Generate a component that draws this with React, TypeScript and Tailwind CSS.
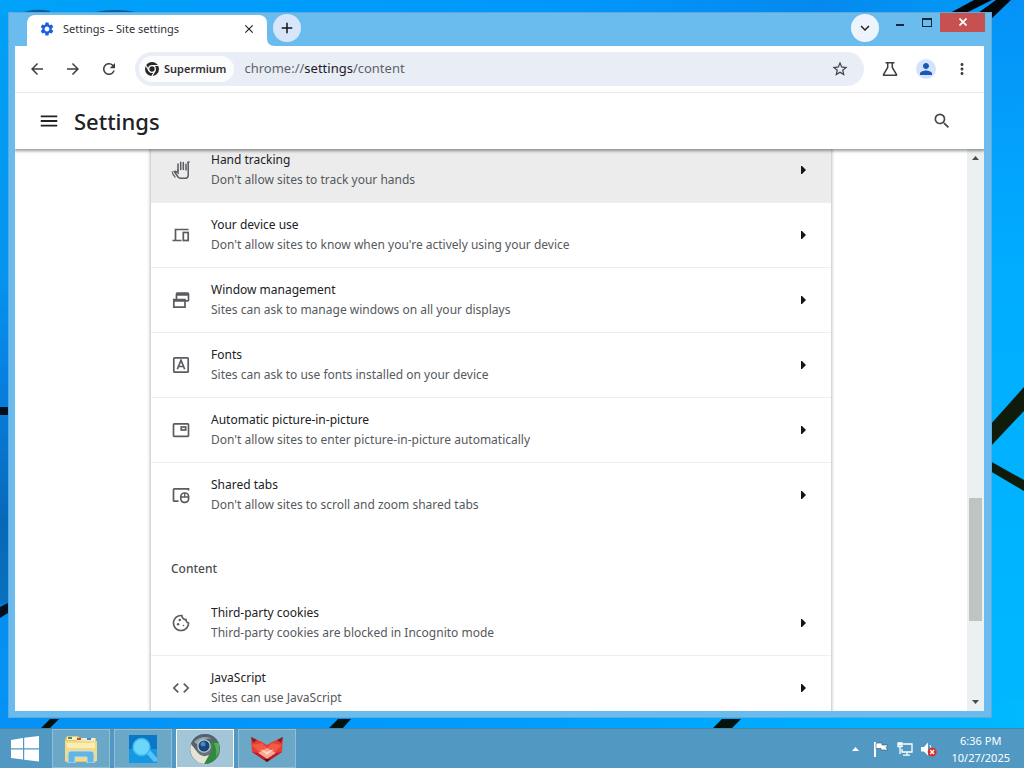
import type { ReactNode } from "react";
import {
  MdArrowBack,
  MdArrowForward,
  MdRefresh,
  MdStarBorder,
  MdPerson,
  MdMoreVert,
  MdMenu,
  MdSearch,
  MdSettings,
  MdClose,
  MdAdd,
  MdKeyboardArrowDown,
  MdCode,
  MdOutlineCookie,
} from "react-icons/md";

type Setting = { title: string; detail: string; icon: ReactNode; active?: boolean };

const stroke = {
  viewBox: "0 0 20 20",
  fill: "none",
  stroke: "currentColor",
  strokeWidth: 1.7,
  className: "size-5",
  "aria-hidden": true,
} as const;

const HandIcon = () => (
  <svg {...stroke} strokeWidth={1.5} strokeLinecap="round">
    <path d="M7 10.500V4M9.700 9.500V2.200M12.300 9.500V2.500M15 10V4.200" />
    <path d="M17.200 2.500V15.500Q17.200 18.200 14.500 18.200H9.500Q8 18.200 7 17L3.200 11.500Q4.500 10.500 7 13V10" />
    <path d="M1.200 11.800Q1.500 14.500 4.200 17.200M16.500 2.300L18.300 1.800" strokeWidth={1.2} />
  </svg>
);

const DevicesIcon = () => (
  <svg {...stroke}>
    <path d="M17.500 4.500H4.500V15M1.500 15.500H10.500" />
    <rect x="12.300" y="7.500" width="4.900" height="8" />
  </svg>
);

const WindowsIcon = () => (
  <svg {...stroke}>
    <path d="M5.500 9V4Q5.500 3.200 6.300 3.200H16.700Q17.500 3.200 17.500 4V10Q17.500 10.800 16.700 10.800H14.500M5.500 4.800H17.500" />
    <path d="M2.800 9.500H14V17.200H2.800ZM2.800 10.800H14" />
  </svg>
);

const FontsIcon = () => (
  <svg {...stroke}>
    <rect x="2.800" y="2.800" width="14.400" height="14.400" rx="0.800" />
    <path d="M6.300 14.300L10 5.300L13.700 14.300M7.500 11.500H12.500" />
  </svg>
);

const PipIcon = () => (
  <svg {...stroke}>
    <rect x="2.500" y="3.800" width="15" height="12.500" rx="0.800" />
    <rect x="10.200" y="7" width="4.500" height="3" />
  </svg>
);

const SharedTabsIcon = () => (
  <svg {...stroke}>
    <path d="M7.500 16.200H3.300Q2.500 16.200 2.500 15.400V4.600Q2.500 3.800 3.300 3.800H17.500V5.500" />
    <rect x="9.800" y="8" width="7.800" height="9.400" rx="3.600" />
    <path d="M9.800 12H17.600M13.700 8V12" strokeWidth={1.3} />
  </svg>
);

const permissions: Setting[] = [
  { title: "Hand tracking", detail: "Don't allow sites to track your hands", icon: <HandIcon />, active: true },
  { title: "Your device use", detail: "Don't allow sites to know when you're actively using your device", icon: <DevicesIcon /> },
  { title: "Window management", detail: "Sites can ask to manage windows on all your displays", icon: <WindowsIcon /> },
  { title: "Fonts", detail: "Sites can ask to use fonts installed on your device", icon: <FontsIcon /> },
  { title: "Automatic picture-in-picture", detail: "Don't allow sites to enter picture-in-picture automatically", icon: <PipIcon /> },
  { title: "Shared tabs", detail: "Don't allow sites to scroll and zoom shared tabs", icon: <SharedTabsIcon /> },
];

const content: Setting[] = [
  { title: "Third-party cookies", detail: "Third-party cookies are blocked in Incognito mode", icon: <MdOutlineCookie className="size-5" /> },
  { title: "JavaScript", detail: "Sites can use JavaScript", icon: <MdCode className="size-5" /> },
];

function SettingList({ items }: { items: Setting[] }) {
  return (
    <ul className="divide-y divide-[#eeeeee]">
      {items.map((s) => (
        <li key={s.title}>
          <button
            type="button"
            className={`flex h-16 w-full items-center px-5 text-left ${s.active ? "bg-[#ececec]" : "bg-white"}`}
          >
            <span className="w-10 shrink-0 text-[#5a5c60]">{s.icon}</span>
            <span className="flex min-w-0 flex-1 flex-col text-xs leading-5">
              <span className="text-[#202124]">{s.title}</span>
              <span className="text-[#56595d]">{s.detail}</span>
            </span>
            <svg viewBox="0 0 5 8" className="mr-[5px] h-2 w-[5px] fill-[#151515]" aria-hidden="true">
              <path d="M0 0H1L5 4L1 8H0Z" />
            </svg>
          </button>
        </li>
      ))}
    </ul>
  );
}

function Wallpaper() {
  return (
    <svg viewBox="0 0 1024 768" preserveAspectRatio="none" className="absolute inset-0 size-full" aria-hidden="true">
      <defs>
        <linearGradient id="sky" x1="0" y1="0" x2="1" y2="0">
          <stop offset="0" stopColor="#00a2f8" />
          <stop offset="0.550" stopColor="#0097fd" />
          <stop offset="0.800" stopColor="#0589ee" />
          <stop offset="1" stopColor="#009df8" />
        </linearGradient>
        <linearGradient id="right" x1="0" y1="0" x2="0" y2="1">
          <stop offset="0" stopColor="#0592f8" />
          <stop offset="0.350" stopColor="#00adff" />
          <stop offset="1" stopColor="#00b9ff" />
        </linearGradient>
        <linearGradient id="left" x1="0" y1="0" x2="0" y2="1">
          <stop offset="0" stopColor="#00a2f8" />
          <stop offset="0.400" stopColor="#0593f0" />
          <stop offset="0.550" stopColor="#077fe0" />
          <stop offset="0.750" stopColor="#0868b8" />
          <stop offset="0.860" stopColor="#0870c0" />
          <stop offset="0.870" stopColor="#058ff0" />
          <stop offset="1" stopColor="#0593f5" />
        </linearGradient>
        <linearGradient id="floor" x1="0" y1="0" x2="1" y2="0">
          <stop offset="0" stopColor="#0590f5" />
          <stop offset="0.500" stopColor="#009dff" />
          <stop offset="1" stopColor="#00b9ff" />
        </linearGradient>
      </defs>
      <rect width="1024" height="768" fill="url(#sky)" />
      <rect x="984" width="40" height="768" fill="url(#right)" />
      <rect width="12" height="700" fill="url(#left)" />
      <rect y="700" width="1024" height="68" fill="url(#floor)" />
      <path d="M24 12Q35 8 50 11V12ZM95 12Q115 8 136 12Z" fill="#075b9c" />
      <path d="M950 13L974 0H992L966 13ZM978 13L996 0H1011L990 20Z" fill="#02070a" />
      <path d="M990 425L1024 387V411L990 447ZM990 461L1024 480V491L990 471Z" fill="#101c0b" />
      <path d="M0 407H8V415H0ZM0 607L8 603V613L0 618Z" fill="#02101b" />
      <path d="M40 729L50 719H59L49 729ZM328 729L338 719H351L342 729ZM712 729L722 719H741L731 729Z" fill="#02130d" />
    </svg>
  );
}

function TabStrip() {
  return (
    <div className="-mr-px flex h-[34px] shrink-0 items-start">
      <div className="ml-3 mt-[3px] flex h-[31px] w-60 items-center rounded-t-lg bg-white pb-[3px] pl-3 pr-2">
        <MdSettings className="size-4 text-[#1a60dc]" />
        <span className="ml-2 flex-1 text-[11px] text-[#303134]">Settings – Site settings</span>
        <button type="button" aria-label="Close tab" className="flex size-5 items-center justify-center text-[#202124]">
          <MdClose className="size-3.5" />
        </button>
      </div>
      <svg viewBox="0 0 8 8" className="size-2 self-end fill-white" aria-hidden="true">
        <path d="M0 0Q0 8 8 8H0Z" />
      </svg>
      <button type="button" aria-label="New tab" className="-ml-0.5 mt-0.5 flex size-7 items-center justify-center rounded-full bg-[#d7e6fb] text-[#151515]">
        <MdAdd className="size-[18px]" />
      </button>
      <div className="ml-auto flex items-start">
        <button type="button" aria-label="Search tabs" className="mr-[7px] mt-0.5 flex size-7 items-center justify-center rounded-full bg-[#edf4fc] text-[#202124]">
          <MdKeyboardArrowDown className="size-[18px]" />
        </button>
        <button type="button" aria-label="Minimize" className="flex h-5 w-[27px] items-center justify-center">
          <span className="mt-1.5 h-0.5 w-2 bg-[#152837]" />
        </button>
        <button type="button" aria-label="Maximize" className="flex h-5 w-[27px] items-center justify-center">
          <span className="h-[9px] w-2.5 border border-t-2 border-[#152837]" />
        </button>
        <button type="button" aria-label="Close" className="flex h-5 w-[45px] items-center justify-center bg-[#c75050] text-white">
          <svg viewBox="0 0 8 8" className="size-2" stroke="currentColor" strokeWidth="1.800" aria-hidden="true">
            <path d="M0.500 0.500L7.500 7.500M7.500 0.500L0.500 7.500" />
          </svg>
        </button>
      </div>
    </div>
  );
}

function Toolbar() {
  return (
    <div className="flex h-[47px] shrink-0 items-center border-b border-[#e8e8e8] bg-white pl-1 pr-1">
      <button type="button" aria-label="Back" className="flex size-9 items-center justify-center text-[#3c4043]">
        <MdArrowBack className="size-[18px]" />
      </button>
      <button type="button" aria-label="Forward" className="flex size-9 items-center justify-center text-[#3c4043]">
        <MdArrowForward className="size-[18px]" />
      </button>
      <button type="button" aria-label="Reload" className="flex size-9 items-center justify-center text-[#3c4043]">
        <MdRefresh className="size-[18px]" />
      </button>
      <div className="ml-2 flex h-[34px] flex-1 items-center rounded-full bg-[#e9eef6] px-1">
        <span className="flex h-[26px] items-center gap-1 rounded-full bg-[#fcfcfd] pl-[5px] pr-2 text-[11px] font-semibold text-[#303134]">
          <svg viewBox="0 0 16 16" className="size-4" aria-hidden="true">
            <circle cx="8" cy="8" r="7" fill="#252729" />
            <circle cx="8" cy="8" r="3.300" fill="#252729" stroke="white" strokeWidth="1.300" />
            <path d="M8 4.500H14M5 9.700L2 4.500M11 9.700L8 15" stroke="white" strokeWidth="1.200" />
          </svg>
          Supermium
        </span>
        <span className="ml-2.5 flex-1 text-[13px] text-[#5f6368]">
          chrome://<span className="text-[#202124]">settings</span>/content
        </span>
        <button type="button" aria-label="Bookmark this page" className="mr-[11px] text-[#3c4043]">
          <MdStarBorder className="size-[18px]" />
        </button>
      </div>
      <button type="button" aria-label="Experiments" className="ml-2 flex size-9 items-center justify-center text-[#3c4043]">
        <svg viewBox="0 0 18 18" className="size-[18px]" fill="none" stroke="currentColor" strokeWidth="1.500" aria-hidden="true">
          <path d="M4.500 2.700H13.500M6.700 3V7.500L2.500 14.500Q2.200 15.300 3 15.300H15Q15.800 15.300 15.500 14.500L11.300 7.500V3" />
        </svg>
      </button>
      <button type="button" aria-label="Profile" className="flex size-9 items-center justify-center">
        <span className="flex size-5 items-center justify-center rounded-full bg-[#d3e3fd] text-[#1a55b8]">
          <MdPerson className="size-[18px]" />
        </span>
      </button>
      <button type="button" aria-label="Menu" className="flex size-9 items-center justify-center text-[#3c4043]">
        <MdMoreVert className="size-[18px]" />
      </button>
    </div>
  );
}

function Scrollbar() {
  return (
    <div className="flex w-[17px] shrink-0 flex-col items-center bg-[#edf0f0]" aria-hidden="true">
      <svg viewBox="0 0 7 4" className="mt-[7px] h-1 w-[7px] fill-[#4b4b4b]">
        <path d="M0 4L3.500 0L7 4Z" />
      </svg>
      <div className="flex w-[13px] flex-1 flex-col py-[7px]">
        <div className="flex-[330]" />
        <div className="flex-[123] bg-[#bfc3c2]" />
        <div className="flex-[72]" />
      </div>
      <svg viewBox="0 0 7 4" className="mb-[7px] h-1 w-[7px] fill-[#4b4b4b]">
        <path d="M0 0L3.500 4L7 0Z" />
      </svg>
    </div>
  );
}

const FolderArt = () => (
  <svg viewBox="0 0 34 28" className="h-7 w-[34px]" aria-hidden="true">
    <path d="M1 4L3 1H14L16 3H32V27H1Z" fill="#e6c66c" />
    <path d="M3 2H13V5H3Z" fill="#f4f0d2" />
    <path d="M4 2H8V4H4Z" fill="#3c9a58" />
    <path d="M13 3H24V6H13Z" fill="#f3e7c8" />
    <path d="M13 3H17V5H13Z" fill="#c8502f" />
    <path d="M23 3H31V6H23Z" fill="#e8eee6" />
    <path d="M23 3H27V5H23Z" fill="#3f8fc4" />
    <path d="M1 6H33V26H1Z" fill="#f3da86" />
    <path d="M3 8H31V13H3Z" fill="#fbeeb2" />
    <path d="M4 28V19Q4 16 7 16H27Q30 16 30 19V28H23V22H11V28Z" fill="#64b5e4" stroke="#b4e0f2" />
  </svg>
);

const SearchArt = () => (
  <svg viewBox="0 0 28 28" className="size-7" aria-hidden="true">
    <rect width="28" height="28" fill="#0878c8" />
    <path d="M0 14H28V28H0Z" fill="#1598e4" />
    <path d="M17 18L21 15L28 23V26L25 27Z" fill="#55c4f5" />
    <circle cx="12.500" cy="12" r="8.500" fill="#6bd8fb" stroke="#44b5ea" strokeWidth="1.500" />
  </svg>
);

const BrowserArt = () => (
  <svg viewBox="0 0 32 32" className="size-8" aria-hidden="true">
    <circle cx="16" cy="16" r="15" fill="#64717a" />
    <path d="M1.500 13Q4 1.500 16 1Q25 1 29 9L20 10Q11 7 9 17Z" fill="#56626b" />
    <path d="M20 9H29.500Q33 21 25 27Q21 31 15 31L22 20Q25 14 20 9Z" fill="#2f8a3e" />
    <path d="M25 10H29.500Q32 18 27 24Q28 16 25 10Z" fill="#58ad5c" />
    <path d="M2 11L9 20Q13 25 20 22L15 31Q7 30 3 23Q0 17 2 11Z" fill="#e3e4d4" />
    <path d="M5 9Q13 1 24 6Q15 4 9 12Z" fill="#94a5ad" />
    <circle cx="15" cy="13" r="6.800" fill="#bac9d5" />
    <circle cx="15" cy="13" r="5.500" fill="#174679" />
    <circle cx="14" cy="11" r="2.500" fill="#4e86b8" />
  </svg>
);

const FoxArt = () => (
  <svg viewBox="0 0 34 28" className="h-7 w-[34px]" aria-hidden="true">
    <path d="M1 2L12 7L17 10L22 7L33 2L32 17L26 21L17 27L8 21L2 17Z" fill="#e63c32" />
    <path d="M1 2L7 5L3 8ZM33 2L27 5L31 8Z" fill="#7b2230" />
    <path d="M2 10L12 8L17 13L22 8L32 10L24 18L17 13L10 18Z" fill="#f05a46" />
    <path d="M8 18L17 13L26 18L17 24Z" fill="#f8a890" />
    <path d="M10 14L17 20L24 14L17 17Z" fill="#ffd7c2" />
    <path d="M2 17L8 18L17 24L26 18L32 17L26 21L17 27L8 21Z" fill="#b51f2d" />
    <path d="M14 24H20L17 27Z" fill="#401622" />
  </svg>
);

const apps = [
  { name: "File Explorer", art: <FolderArt />, current: false },
  { name: "Search", art: <SearchArt />, current: false },
  { name: "Supermium", art: <BrowserArt />, current: true },
  { name: "Fox", art: <FoxArt />, current: false },
];

function Taskbar() {
  return (
    <footer className="relative flex h-10 shrink-0 items-stretch border-t border-[#4588ae] bg-[#5199c2] text-white">
      <button type="button" aria-label="Start" className="flex w-[52px] items-center justify-center pr-0.5">
        <svg viewBox="0 0 28 26" className="h-[26px] w-7 fill-white" aria-hidden="true">
          <path d="M0 4L12 2V12.300H0ZM13.200 1.800L28 0V12.300H13.200ZM0 13.500H12V23.500L0 22ZM13.200 13.500H28V25.500L13.200 23.700Z" />
        </svg>
      </button>
      <div className="flex gap-1">
        {apps.map((a) => (
          <button
            key={a.name}
            type="button"
            aria-label={a.name}
            className={`flex w-[58px] items-center justify-center border ${
              a.current ? "border-white bg-[#a3c5d8]" : "border-[#91bdd5] bg-[#6ba7c7]"
            }`}
          >
            {a.art}
          </button>
        ))}
      </div>
      <div className="ml-auto flex items-center pr-3.5">
        <svg viewBox="0 0 7 4" className="h-1 w-[7px] fill-white" aria-hidden="true">
          <path d="M0 4L3.500 0L7 4Z" />
        </svg>
        <svg viewBox="0 0 16 16" className="ml-3.5 size-4" aria-hidden="true">
          <path d="M1 1H3V16H1Z" fill="white" />
          <path d="M3 2H9V4H15L13 6.500L15 9H8V7.500H3Z" fill="white" stroke="#31566d" strokeWidth="0.600" />
        </svg>
        <svg viewBox="0 0 16 16" className="ml-2 size-4" fill="none" stroke="white" strokeWidth="1.300" aria-hidden="true">
          <path d="M6 3H15V11H5V8M10 11V14M6 14.200H13M3 6V13M1 2V5.500H5V2ZM1 3.500H5" />
        </svg>
        <svg viewBox="0 0 16 16" className="ml-2 size-4" aria-hidden="true">
          <path d="M0 6H3L7 1.500V14.500L3 10.500H0Z" fill="white" />
          <path d="M9 4Q12 8 9 12" fill="none" stroke="white" />
          <circle cx="11.200" cy="11" r="4.500" fill="#d8302c" />
          <path d="M9.300 9.100L13.100 12.900M13.100 9.100L9.300 12.900" stroke="white" strokeWidth="1.400" />
        </svg>
        <div className="ml-3.5 text-center text-[11px] leading-[17px]">
          <div>6:36 PM</div>
          <div>10/27/2025</div>
        </div>
      </div>
    </footer>
  );
}

export default function App() {
  return (
    <div className="relative flex h-screen flex-col overflow-hidden font-['Noto_Sans','Open_Sans',sans-serif]">
      <Wallpaper />
      <main className="relative mb-2.5 ml-2 mr-8 mt-3 flex min-h-0 flex-1 flex-col bg-[#6abcee] pb-[7px] pl-[7px] pr-2 outline outline-[#62a9d8] -outline-offset-1">
        <TabStrip />
        <Toolbar />
        <header className="relative z-10 flex h-14 shrink-0 items-center bg-white px-[23px] shadow-[0_1px_3px_1px_rgba(0,0,0,0.4)] [clip-path:inset(0_0_-6px_0)]">
          <button type="button" aria-label="Main menu" className="text-[#202124]">
            <MdMenu className="size-[22px]" />
          </button>
          <h1 className="ml-3.5 text-[22px] font-medium leading-8 text-[#202124]">Settings</h1>
          <button type="button" aria-label="Search settings" className="ml-auto mr-[9px] text-[#444649]">
            <MdSearch className="size-5" />
          </button>
        </header>
        <div className="flex min-h-0 flex-1 bg-white">
          <div className="flex-1 overflow-hidden">
            <div className="mx-auto -mt-[11px] max-w-[680px] bg-white shadow-[0_0_3px_1px_rgba(0,0,0,0.26)]">
              <SettingList items={permissions} />
              <h2 className="px-5 pb-3 pt-8 text-xs font-medium leading-5 text-[#4b4e52]">Content</h2>
              <SettingList items={content} />
            </div>
          </div>
          <Scrollbar />
        </div>
      </main>
      <Taskbar />
    </div>
  );
}
